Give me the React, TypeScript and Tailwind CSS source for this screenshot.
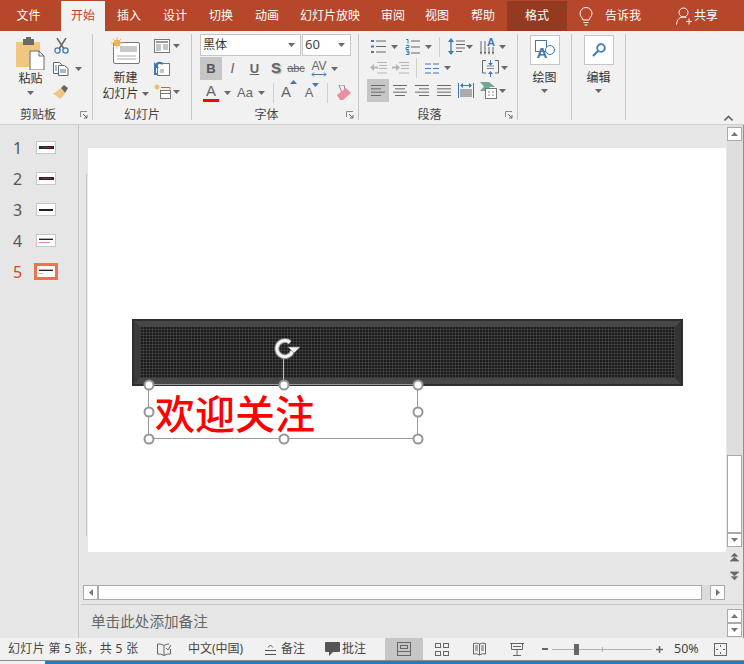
const Caret = ({ up = false, color = "#6a6a6a" }: { up?: boolean; color?: string }) => (
  <svg width="7" height="4" viewBox="0 0 7 4" className="shrink-0">
    <path d={up ? "M0 4L3.5 0L7 4Z" : "M0 0L7 0L3.5 4Z"} fill={color} />
  </svg>
);

const Launcher = () => (
  <svg width="8" height="8" viewBox="0 0 8 8" className="shrink-0">
    <path d="M.5 6V.5H7" fill="none" stroke="#8a8a8a" />
    <path d="M3 3L7 7M7 4V7H4" fill="none" stroke="#6a6a6a" />
  </svg>
);

// stacked text lines: every row is [x1, x2]
const Lines = ({ rows, w = 15, h = 13, color = "#6a6a6a" }: { rows: number[][]; w?: number; h?: number; color?: string }) => (
  <svg width={w} height={h} viewBox={`0 0 ${w} ${h}`} className="shrink-0">
    {rows.map(([a, b], i) => (
      <rect key={i} x={a} y={i * ((h - 1) / (rows.length - 1))} width={b - a} height="1" fill={color} />
    ))}
  </svg>
);

const PasteIcon = () => (
  <svg width="29" height="33" viewBox="0 0 29 33">
    <path d="M0 5h24v25H0z" fill="#efc77f" />
    <path d="M7 2h3V0h5v2h3v6H7z" fill="#6a6a6a" />
    <path d="M14 14h9l5 5v14H14z" fill="#fff" stroke="#6a6a6a" />
    <path d="M23 14v5h5" fill="none" stroke="#6a6a6a" />
  </svg>
);

const CutIcon = () => (
  <svg width="15" height="16" viewBox="0 0 15 16">
    <path d="M3 0L10 11M12 0L5 11" stroke="#666" strokeWidth="1.5" fill="none" />
    <circle cx="3.5" cy="12.5" r="2.6" fill="none" stroke="#3f78b5" strokeWidth="1.3" />
    <circle cx="11.5" cy="12.5" r="2.6" fill="none" stroke="#3f78b5" strokeWidth="1.3" />
  </svg>
);

const CopyIcon = () => (
  <svg width="16" height="14" viewBox="0 0 16 14">
    <path d="M.5.5h6l3 3v8h-9z" fill="#fff" stroke="#666" />
    <path d="M5.5 3.5h6l3.500 3v7h-9.500z" fill="#fff" stroke="#666" />
    <path d="M7 8h6M7 10h6M2 4h2M2 6h2M2 8h2" stroke="#3f78b5" />
  </svg>
);

const BrushIcon = () => (
  <svg width="16" height="14" viewBox="0 0 16 14">
    <path d="M0 9L8 3L12 9L7 14Q3 10 0 9Z" fill="#efc77f" />
    <path d="M8 3L11 0L15 3L12 8Z" fill="#666" />
  </svg>
);

const NewSlideIcon = () => (
  <svg width="29" height="28" viewBox="0 0 29 28">
    <rect x="2.500" y="5.500" width="26" height="21" rx="1.500" fill="#fff" stroke="#777" />
    <rect x="9" y="9" width="17" height="6" fill="#c9c9c9" />
    <path d="M6 19h19M6 22h19" stroke="#aaa" />
    <circle cx="6" cy="6" r="3.200" fill="#f2b25a" />
    <path d="M6 0v12M0 6h12M2 2l8 8M10 2l-8 8" stroke="#f2b25a" />
  </svg>
);

const LayoutIcon = () => (
  <svg width="16" height="14" viewBox="0 0 16 14">
    <rect x=".5" y=".5" width="15" height="13" fill="#fff" stroke="#777" />
    <rect x="2" y="2" width="12" height="2" fill="#999" />
    <rect x="2" y="5" width="5" height="7" fill="#c4c4c4" />
    <path d="M9 6h5M9 8h5M9 10h5" stroke="#888" />
  </svg>
);

const ResetIcon = () => (
  <svg width="16" height="15" viewBox="0 0 16 15">
    <rect x="3.500" y="2.500" width="12" height="12" fill="#fff" stroke="#777" />
    <rect x="6" y="8" width="4" height="4" fill="#c4c4c4" />
    <path d="M1 5Q4 0 9 3" fill="none" stroke="#3f78b5" strokeWidth="2" />
    <path d="M0 1v6h5z" fill="#3f78b5" />
    <path d="M1 7v6h3" fill="none" stroke="#3f78b5" strokeWidth="2" />
  </svg>
);

const SectionIcon = () => (
  <svg width="17" height="15" viewBox="0 0 17 15">
    <circle cx="3" cy="3" r="1.700" fill="#f2b25a" />
    <path d="M3 0v6M0 3h6M1 1l4 4M5 1l-4 4" stroke="#f2b25a" strokeWidth=".8" />
    <path d="M7 3.500h9v2" fill="none" stroke="#d0652f" />
    <rect x="6.500" y="6.500" width="10" height="8" fill="#fff" stroke="#777" />
    <path d="M6 9.500h11" stroke="#777" />
  </svg>
);

const EraserIcon = () => (
  <svg width="16" height="16" viewBox="0 0 16 16">
    <path d="M3 0L8 0L9 5L6 8Z" fill="none" stroke="#888" />
    <path d="M1 10L10 3L15 8L7 15H4Z" fill="#e8909e" />
  </svg>
);

const Bullets = () => (
  <svg width="15" height="15" viewBox="0 0 15 15">
    <path d="M0 1h3v2H0zM0 6.500h3v2H0zM0 12h3v2H0z" fill="#3f78b5" />
    <path d="M5 2h10M5 7.500h10M5 13h10" stroke="#666" />
  </svg>
);

const Numbers = () => (
  <svg width="15" height="16" viewBox="0 0 15 16">
    <path d="M1 .5h2v4M1 6.500h3v2H1v2h3M1 12h3v3.500H1M2 13.700h2" fill="none" stroke="#3f78b5" />
    <path d="M6 2h9M6 8h9M6 14h9" stroke="#666" />
  </svg>
);

const LineSpacing = () => (
  <svg width="17" height="17" viewBox="0 0 17 17">
    <path d="M3 1v15" stroke="#3f78b5" strokeWidth="1.300" />
    <path d="M0 4L3 0L6 4zM0 13L3 17L6 13z" fill="#3f78b5" />
    <path d="M8 3h9M8 6.500h9M8 10h9M8 13.500h6" stroke="#666" />
  </svg>
);

const TextDir = () => (
  <div className="relative w-[16px] h-[19px] shrink-0">
    <svg width="16" height="19" viewBox="0 0 16 19">
      <path d="M1 4v12M5 4v12M9 10v6M13 10v6" stroke="#666" />
      <path d="M0 15h2l-1 3zM4 15h2l-1 3zM8 15h2l-1 3zM12 15h2l-1 3z" fill="#555" />
    </svg>
    <span className="absolute left-[7px] top-0 text-[11px] leading-[10px] font-bold text-[#3f78b5] font-['Liberation_Sans',sans-serif]">A</span>
  </div>
);

const Indent = ({ out = false }: { out?: boolean }) => (
  <svg width="17" height="12" viewBox="0 0 17 12">
    <path d="M7 .5h10M9 3.500h8M9 6.500h8M7 11h10" stroke="#b5b5b5" />
    {out ? <path d="M0 5.500L4 2V4.500H8V6.500H4V9z" fill="#b5b5b5" /> : <path d="M8 5.500L4 2V4.500H0V6.500H4V9z" fill="#b5b5b5" />}
  </svg>
);

const Columns = () => (
  <svg width="14" height="11" viewBox="0 0 14 11">
    <path d="M0 1h6M0 5.500h6M0 10h6M8 1h6M8 5.500h6M8 10h6" stroke="#3f78b5" strokeWidth="1.200" />
  </svg>
);

const AlignText = () => (
  <svg width="17" height="17" viewBox="0 0 17 17">
    <path d="M4 .5H.5V13H4M13 .5h3.500V13H13" fill="none" stroke="#666" />
    <path d="M5 6h7M5 8.500h7" stroke="#888" />
    <path d="M8.500 0v4" stroke="#3f78b5" />
    <path d="M6 3h5L8.500 5.500zM6 14h5L8.500 11z" fill="#3f78b5" />
    <path d="M8.500 14v3" stroke="#3f78b5" />
  </svg>
);

const Distribute = () => (
  <svg width="16" height="15" viewBox="0 0 16 15">
    <path d="M.5 0v15M15.500 0v15" stroke="#3f78b5" />
    <path d="M3 2.500h10" stroke="#3f78b5" />
    <path d="M2 2.500L5 0V5zM14 2.500L11 0V5z" fill="#3f78b5" />
    <path d="M2 7h12M2 9h12M2 11h12M2 13h12" stroke="#666" />
  </svg>
);

const SmartArt = () => (
  <svg width="17" height="17" viewBox="0 0 17 17">
    <path d="M0 0H9L15 5H10L6 9H0L4 4.500z" fill="#6fa896" />
    <rect x="5.500" y="6.500" width="11" height="10" fill="#fff" stroke="#777" />
    <path d="M8 10h2M8 13h2M12 10h2M12 13h2" stroke="#888" />
  </svg>
);

const ShapesIcon = () => (
  <div className="relative w-[20px] h-[20px]">
    <svg width="20" height="16" viewBox="0 0 20 16">
      <rect x=".5" y=".5" width="11" height="11" fill="none" stroke="#3f78b5" />
      <circle cx="15" cy="10" r="4.500" fill="#fff" stroke="#3f78b5" />
    </svg>
    <span className="absolute left-[2px] top-[6px] text-[15px] leading-[14px] font-bold text-[#3f78b5] font-['Liberation_Sans',sans-serif]">A</span>
  </div>
);

const SearchIcon = () => (
  <svg width="14" height="14" viewBox="0 0 14 14">
    <circle cx="9" cy="5" r="3.800" fill="#fff" stroke="#3f78b5" strokeWidth="1.800" />
    <path d="M6 8L1 13" stroke="#3f78b5" strokeWidth="2.200" />
  </svg>
);

const Group = ({ w, label, labelPad, launcher, children }: { w: string; label: string; labelPad?: string; launcher?: boolean; children: React.ReactNode }) => (
  <div className={`${w} h-[86px] shrink-0 border-r border-[#c6c6c6] flex flex-col`}>
    <div className="flex-1 min-h-0">{children}</div>
    <div className={`h-[14px] relative flex items-center justify-center text-[12px] leading-[14px] text-[#444] ${labelPad ?? ""}`}>
      <span className="translate-y-[2px]">{label}</span>
      {launcher && (
        <span className="absolute right-[4px] top-[5px]">
          <Launcher />
        </span>
      )}
    </div>
  </div>
);

const ScrollBtn = ({ dir, h = "h-[14px]" }: { dir: "up" | "down" | "left" | "right"; h?: string }) => (
  <div className={`${h} w-[15px] shrink-0 bg-white border border-[#aaaaaa] flex items-center justify-center`}>
    {dir === "up" && <Caret up color="#777" />}
    {dir === "down" && <Caret color="#777" />}
    {dir === "left" && (
      <svg width="4" height="7" viewBox="0 0 4 7">
        <path d="M4 0V7L0 3.500Z" fill="#777" />
      </svg>
    )}
    {dir === "right" && (
      <svg width="4" height="7" viewBox="0 0 4 7">
        <path d="M0 0V7L4 3.500Z" fill="#777" />
      </svg>
    )}
  </div>
);

const DoubleArrow = ({ up }: { up?: boolean }) => (
  <svg width="9" height="9" viewBox="0 0 9 9">
    {up ? <path d="M4.500 0L8 3.500H1zM4.500 4L9 8H0zM0 8.500h9" fill="#666" stroke="#666" strokeWidth=".3" /> : <path d="M4.500 9L8 5.500H1zM4.500 5L9 1H0zM0 .5h9" fill="#666" stroke="#666" strokeWidth=".3" />}
  </svg>
);

const tabs = [
  { t: "开始", w: "w-[44px]", on: true },
  { t: "插入", w: "w-[48px]" },
  { t: "设计", w: "w-[44px]" },
  { t: "切换", w: "w-[48px]" },
  { t: "动画", w: "w-[44px]" },
  { t: "幻灯片放映", w: "w-[82px]" },
  { t: "审阅", w: "w-[44px]" },
  { t: "视图", w: "w-[44px]" },
  { t: "帮助", w: "w-[48px]" },
];

const handles = [
  [0, 0], [134.500, 0], [269, 0],
  [0, 27], [269, 27],
  [0, 54], [134.500, 54], [269, 54],
];

// little previews in the slide list
const Thumb = ({ n }: { n: number }) => (
  <div className="w-full h-full flex flex-col items-center justify-center">
    {n <= 2 && (
      <div className="w-[15px] h-[3px] bg-[#3c2226] flex items-center justify-center">
        <div className={`w-[9px] h-px ${n === 1 ? "bg-[#b01020]" : "bg-[#7a2a30]"}`} />
      </div>
    )}
    {n === 3 && <div className="w-[14px] h-[2px] bg-[#222222]" />}
    {n >= 4 && (
      <>
        <div className="w-[14px] h-px bg-[#b0b0b0]" />
        <div className="w-[14px] h-px bg-[#222222]" />
        <div className={`${n === 4 ? "w-[11px] bg-[#e58a8a]" : "w-[4px] bg-[#f0a0a0]"} h-px mt-[2px] self-start ml-[2px]`} />
      </>
    )}
  </div>
);

export default function App() {
  return (
    <div className="w-[744px] h-[664px] overflow-hidden flex flex-col bg-[#e6e6e6] text-[12px] font-['Noto_Sans','Noto_Sans_CJK_SC',sans-serif]">
      {/* Tab bar */}
      <div className="h-[31px] shrink-0 bg-[#b7472a] flex items-end text-white">
        <div className="w-[61px] pr-[4px] h-[30px] flex items-center justify-center">文件</div>
        {tabs.map((tab) => (
          <div key={tab.t} className={`${tab.w} h-[30px] flex items-center justify-center ${tab.on ? "bg-[#f1f1f1] text-[#b7472a]" : ""}`}>
            {tab.t}
          </div>
        ))}
        <div className="w-[60px] h-[30px] bg-[#933a20] flex items-center justify-center">格式</div>
        <div className="ml-[12px] h-[30px] flex items-center">
          <svg width="14" height="19" viewBox="0 0 14 19" fill="none" stroke="#fff">
            <path d="M4 13C3 10 1 9 1 6.500a6 6 0 0 1 12 0C13 9 11 10 10 13z" />
            <path d="M4.500 15.500h5M5.500 18h3" />
          </svg>
        </div>
        <div className="ml-[12px] h-[30px] flex items-center">告诉我</div>
        <div className="ml-[35px] h-[30px] flex items-center">
          <svg width="17" height="18" viewBox="0 0 17 18" fill="none" stroke="#fff">
            <circle cx="7.500" cy="5.500" r="4.500" />
            <path d="M.5 17.500C1 12 4 10 7.500 10c1 0 2 .2 2.800.6M13 11.500v6M10 14.500h6" />
          </svg>
        </div>
        <div className="ml-[1px] h-[30px] flex items-center">共享</div>
      </div>

      {/* Ribbon */}
      <div className="h-[94px] shrink-0 pt-[3px] flex border-b border-[#d0d0d0] bg-[#f1f1f1] bg-[radial-gradient(#fbfbfb_0.6px,transparent_0.7px)] bg-[length:4px_4px] text-[#333]">
        <Group w="w-[93px]" label="剪贴板" labelPad="pr-[16px]" launcher>
          <div className="flex">
            <div className="w-[52px] pl-[16px] pr-[7px] pt-[3px] flex flex-col items-center shrink-0">
              <PasteIcon />
              <div className="mt-[1px] leading-[16px] whitespace-nowrap">粘贴</div>
              <div className="mt-[4px]"><Caret /></div>
            </div>
            <div className="flex flex-col pl-[1px]">
              <div className="h-[23px] w-[16px] flex items-center justify-center"><CutIcon /></div>
              <div className="h-[23px] flex items-center"><CopyIcon /><span className="ml-[6px]"><Caret /></span></div>
              <div className="h-[23px] w-[16px] flex items-center justify-center"><BrushIcon /></div>
            </div>
          </div>
        </Group>

        <Group w="w-[99px]" label="幻灯片">
          <div className="flex">
            <div className="ml-[4px] w-[57px] pt-[3px] flex flex-col items-center shrink-0">
              <NewSlideIcon />
              <div className="mt-[5px] leading-[16px]">新建</div>
              <div className="leading-[16px] flex items-center whitespace-nowrap">幻灯片<span className="ml-[3px]"><Caret /></span></div>
            </div>
            <div className="flex flex-col">
              <div className="h-[23px] flex items-center"><LayoutIcon /><span className="ml-[3px]"><Caret /></span></div>
              <div className="h-[23px] flex items-center"><ResetIcon /></div>
              <div className="h-[23px] flex items-center"><SectionIcon /><span className="ml-[2px]"><Caret /></span></div>
            </div>
          </div>
        </Group>

        <Group w="w-[167px]" label="字体" labelPad="pr-[17px]" launcher>
          <div className="pl-[8px]">
            <div className="flex h-[23px] gap-[1px]">
              <div className="w-[101px] h-[22px] bg-white border border-[#c6c6c6] flex items-center justify-between pl-[2px] pr-[5px] text-[#333]">黑体<Caret /></div>
              <div className="w-[49px] h-[22px] bg-white border border-[#c6c6c6] flex items-center justify-between pl-[2px] pr-[5px] text-[13px] text-[#444]">60<Caret /></div>
            </div>
            <div className="flex h-[23px] items-center text-[#666] font-['Liberation_Sans',sans-serif]">
              <div className="w-[22px] h-[23px] bg-[#c6c6c6] flex items-center justify-center text-[13px] font-bold text-[#555]">B</div>
              <div className="w-[21px] flex justify-center text-[14px] italic">I</div>
              <div className="w-[23px] flex justify-center text-[13px] font-bold underline">U</div>
              <div className="w-[20px] flex justify-center text-[15px] font-bold [text-shadow:1px_1px_1px_#aaa]">S</div>
              <div className="w-[20px] flex justify-center text-[11px] line-through">abc</div>
              <div className="w-[26px] flex flex-col items-center leading-[10px] text-[12px]">
                AV
                <svg width="16" height="5" viewBox="0 0 16 5" className="mt-[1px]">
                  <path d="M1 2.500h14M3 .5L1 2.500l2 2M13 .5l2 2-2 2" fill="none" stroke="#3f78b5" />
                </svg>
              </div>
              <span className="ml-[-1px]"><Caret /></span>
            </div>
            <div className="flex h-[25px] items-center text-[#666] font-['Liberation_Sans',sans-serif]">
              <div className="w-[22px] flex flex-col items-center">
                <div className="text-[15px] leading-[15px]">A</div>
                <div className="w-[16px] h-[3px] bg-[#ff0000] mt-[1px]" />
              </div>
              <div className="w-[10px] flex justify-center"><Caret /></div>
              <div className="w-[26px] flex justify-center text-[13px]">Aa</div>
              <Caret />
              <div className="ml-[8px] h-[20px] w-px bg-[#d0d0d0]" />
              <div className="w-[30px] flex justify-center text-[15px]">A<span className="ml-[-1px] mt-[-1px]"><Caret up color="#3f78b5" /></span></div>
              <div className="w-[16px] flex justify-center text-[13px]">A<span className="ml-[-1px]"><Caret color="#3f78b5" /></span></div>
              <div className="ml-[7px] h-[20px] w-px bg-[#d0d0d0]" />
              <div className="ml-[8px]"><EraserIcon /></div>
            </div>
          </div>
        </Group>

        <Group w="w-[159px]" label="段落" labelPad="pr-[17px]" launcher>
          <div className="h-[23px] flex items-center pl-[12px] pt-[2px]">
            <Bullets /><span className="ml-[5px]"><Caret /></span>
            <span className="ml-[7px]"><Numbers /></span><span className="ml-[5px]"><Caret /></span>
            <div className="ml-[7px] h-[20px] w-px bg-[#d0d0d0]" />
            <span className="ml-[8px]"><LineSpacing /></span><span className="ml-[1px]"><Caret /></span>
            <span className="ml-[7px]"><TextDir /></span><span className="ml-[3px]"><Caret /></span>
          </div>
          <div className="h-[22px] flex items-center pl-[11px]">
            <Indent out /><span className="ml-[5px]"><Indent /></span>
            <div className="ml-[7px] h-[20px] w-px bg-[#d0d0d0]" />
            <span className="ml-[8px]"><Columns /></span><span className="ml-[5px]"><Caret /></span>
            <span className="ml-[31px]"><AlignText /></span><span className="ml-[2px]"><Caret /></span>
          </div>
          <div className="h-[23px] flex items-center pl-[8px]">
            <div className="w-[22px] h-[23px] bg-[#c6c6c6] flex items-center justify-center"><Lines rows={[[0, 14], [0, 10], [0, 14], [0, 10]]} w={14} h={11} /></div>
            <div className="w-[22px] flex justify-center"><Lines rows={[[0, 14], [2, 12], [0, 14], [2, 12]]} w={14} h={11} /></div>
            <div className="w-[22px] flex justify-center"><Lines rows={[[0, 14], [4, 14], [0, 14], [4, 14]]} w={14} h={11} /></div>
            <div className="w-[22px] flex justify-center"><Lines rows={[[0, 14], [0, 14], [0, 14], [0, 14]]} w={14} h={11} /></div>
            <div className="w-[22px] flex justify-center"><Distribute /></div>
            <span className="ml-[3px]"><SmartArt /></span><span className="ml-[2px]"><Caret /></span>
          </div>
        </Group>

        <Group w="w-[54px]" label="">
          <div className="flex flex-col items-center">
            <div className="mt-[1px] w-[30px] h-[30px] bg-white border border-[#c6c6c6] flex items-center justify-center"><ShapesIcon /></div>
            <div className="mt-[5px] leading-[16px]">绘图</div>
            <div className="mt-[3px]"><Caret /></div>
          </div>
        </Group>

        <Group w="w-[54px]" label="">
          <div className="flex flex-col items-center">
            <div className="mt-[1px] w-[30px] h-[30px] bg-white border border-[#c6c6c6] flex items-center justify-center"><SearchIcon /></div>
            <div className="mt-[5px] leading-[16px]">编辑</div>
            <div className="mt-[3px]"><Caret /></div>
          </div>
        </Group>

        <div className="flex-1 flex items-end justify-end pr-[11px] pb-[3px]">
          <svg width="9" height="6" viewBox="0 0 9 6">
            <path d="M.5 5.500L4.500 1.500L8.500 5.500" fill="none" stroke="#666" strokeWidth="1.600" />
          </svg>
        </div>
      </div>

      {/* Main area */}
      <div className="flex-1 min-h-0 flex">
        <div className="w-[79px] shrink-0 border-r border-[#c6c6c6] pt-[7px]">
          {[1, 2, 3, 4].map((n) => (
            <div key={n} className="h-[31px] flex items-center text-[16px] text-[#555]">
              <span className="w-[36px] pl-[13px]">{n}</span>
              <div className="w-[20px] h-[13px] bg-white border border-[#c6c6c6]">
                <Thumb n={n} />
              </div>
            </div>
          ))}
          <div className="h-[31px] flex items-center text-[16px] text-[#d24726]">
            <span className="w-[34px] pl-[13px]">5</span>
            <div className="w-[24px] h-[17px] bg-white border-[3px] border-[#f0704f]">
              <Thumb n={5} />
            </div>
          </div>
        </div>

        <div className="flex-1 min-w-0 flex flex-col border-r border-[#909090]">
          <div className="h-[460px] shrink-0 flex">
            <div className="flex-1 min-w-0 pt-[23px] pl-[9px]">
              <div className="w-[638px] h-[404px] bg-white relative">
                {/* left edge of the slide placeholder */}
                <div className="absolute left-[-2px] top-[26px] h-[362px] w-px bg-[#c6c6c6]" />
                {/* banner */}
                <div className="absolute left-[44px] top-[171px] w-[551px] h-[67px] border-[2px] border-[#2e2e2e] bg-[#2e2e2e]">
                  <div className="w-full h-full border-[6px] border-t-[#474747] border-l-[#3a3a3a] border-r-[#333333] border-b-[#474747] bg-[#1c1c1c] bg-[repeating-linear-gradient(90deg,rgba(255,255,255,0.11)_0_1px,transparent_1px_3px),repeating-linear-gradient(0deg,rgba(255,255,255,0.11)_0_1px,transparent_1px_3px)]" />
                </div>
                {/* selected text box */}
                <div className="absolute left-[60px] top-[236px] w-[270px] h-[55px] border border-[#9a9a9a]">
                  <div className="pl-[6px] pt-[2px] text-[40px] leading-[50px] font-medium text-[#ff0000] font-['Noto_Sans_CJK_SC',sans-serif] whitespace-nowrap">欢迎关注</div>
                  <div className="absolute left-[134px] top-[-27px] w-px h-[27px] bg-[#bbbbbb]" />
                  <svg width="28" height="24" viewBox="0 0 28 24" className="absolute left-[124px] top-[-47px]">
                    <path d="M17 4.500A8 8 0 1 0 19.500 13" fill="none" stroke="#8a8a8a" strokeWidth="5" />
                    <path d="M17 4.500A8 8 0 1 0 19.500 13" fill="none" stroke="#f4f4f4" strokeWidth="3" />
                    <path d="M15 9L27 9L21 15Z" fill="#f4f4f4" stroke="#8a8a8a" strokeWidth=".8" />
                  </svg>
                  {handles.map(([x, y]) => (
                    <div key={`${x}-${y}`} className="absolute w-[11px] h-[11px] rounded-full bg-white border-2 border-[#959595] -translate-x-1/2 -translate-y-1/2" style={{ left: x, top: y }} />
                  ))}
                </div>
              </div>
            </div>
            <div className="w-[16px] shrink-0 flex flex-col">
              <div className="h-[422px] bg-[#dedede] bg-[radial-gradient(#ebebeb_0.6px,transparent_0.7px)] bg-[length:4px_4px] pt-[2px] flex flex-col">
                <ScrollBtn dir="up" />
                <div className="flex-1" />
                <div className="w-[15px] h-[78px] bg-white border border-[#aaaaaa]" />
                <ScrollBtn dir="down" />
              </div>
              <div className="flex-1 flex flex-col items-center pr-[1px] pt-[6px] gap-[9px]">
                <DoubleArrow up />
                <DoubleArrow />
              </div>
            </div>
          </div>

          <div className="h-[15px] shrink-0 pl-[4px] flex">
            <ScrollBtn dir="left" h="h-[15px]" />
            <div className="w-[604px] h-[15px] bg-white border border-[#aaaaaa]" />
            <div className="w-[8px] h-[15px] bg-[#dcdcdc]" />
            <ScrollBtn dir="right" h="h-[15px]" />
          </div>

          <div className="mt-[4px] flex-1 min-h-0 border-t border-[#c6c6c6] flex ml-[2px]">
            <div className="flex-1 pl-[10px] pt-[6px] text-[14.600px] leading-[20px] text-[#666] whitespace-nowrap">单击此处添加备注</div>
            <div className="w-[16px] shrink-0 pt-[4px] flex flex-col">
              <ScrollBtn dir="up" />
              <ScrollBtn dir="down" />
            </div>
          </div>
        </div>
      </div>

      {/* Status bar */}
      <div className="h-[22px] shrink-0 bg-[#f1f1f1] bg-[radial-gradient(#fbfbfb_0.6px,transparent_0.7px)] bg-[length:4px_4px] flex items-center text-[#444] whitespace-nowrap">
        <span className="ml-[8px] w-[130px] tracking-[0.35px]">幻灯片 第 5 张，共 5 张</span>
        <svg width="14" height="13" viewBox="0 0 14 13" className="ml-[19px]" fill="none" stroke="#666">
          <path d="M7 2.500Q4 .5 .5 1v10Q4 10.500 7 12.500V2.500M7 2.500Q9 1 12 1M7 12.500Q10 10.500 13.500 11V6" />
          <path d="M9 5l2 2 3-5" />
        </svg>
        <span className="ml-[17px] w-[57px]">中文(中国)</span>
        <svg width="11" height="11" viewBox="0 0 11 11" className="ml-[20px]" fill="none" stroke="#555">
          <path d="M3 3.500L5.500 1L8 3.500M0 6.500h11M0 10.500h11" />
        </svg>
        <span className="ml-[5px]">备注</span>
        <svg width="15" height="14" viewBox="0 0 15 14" className="ml-[20px]">
          <path d="M1 0h13a1 1 0 0 1 1 1v8a1 1 0 0 1-1 1H8l-4 4v-4H1a1 1 0 0 1-1-1V1a1 1 0 0 1 1-1z" fill="#555" />
        </svg>
        <span className="ml-[2px]">批注</span>
        <div className="ml-[19px] w-[38px] h-[22px] bg-[#c6c6c6] flex items-center justify-center">
          <svg width="14" height="14" viewBox="0 0 14 14" fill="none" stroke="#666">
            <rect x=".5" y=".5" width="13" height="13" />
            <rect x="3.500" y="3.500" width="7" height="3" />
            <path d="M.5 9.500h13" />
          </svg>
        </div>
        <svg width="14" height="13" viewBox="0 0 14 13" className="ml-[12px]" fill="none" stroke="#666">
          <rect x=".5" y=".5" width="5" height="4" />
          <rect x="8.500" y=".5" width="5" height="4" />
          <rect x=".5" y="8.500" width="5" height="4" />
          <rect x="8.500" y="8.500" width="5" height="4" />
        </svg>
        <svg width="13" height="14" viewBox="0 0 13 14" className="ml-[24px]" fill="none" stroke="#666">
          <path d="M.5 1.500Q4 .5 6.500 2Q9 .5 12.500 1.500V12Q9 11 6.500 13Q4 11 .5 12zM6.500 2v11M2 4h3M2 6h3M2 8h3M8 4h3M8 6h3M8 8h3" />
        </svg>
        <svg width="14" height="13" viewBox="0 0 14 13" className="ml-[24px]" fill="none" stroke="#666">
          <path d="M0 .5h14M1.500 1v5.500h11V1M7 7v5M3 12.500h8" />
          <path d="M3 3.500h8" />
        </svg>
        <div className="ml-[18px] w-[6px] h-[2px] bg-[#666]" />
        <div className="ml-[4px] w-[100px] h-[1px] bg-[#b0b0b0] relative">
          <div className="absolute left-[22px] top-[-5px] w-[5px] h-[11px] bg-[#666]" />
          <div className="absolute left-[50px] top-[-2px] w-px h-[5px] bg-[#b0b0b0]" />
        </div>
        <svg width="7" height="7" viewBox="0 0 7 7" className="ml-[4px]">
          <path d="M0 3.500h7M3.500 0v7" stroke="#666" strokeWidth="1.500" />
        </svg>
        <span className="ml-[11px] text-[12.500px] w-[28px]">50%</span>
        <svg width="13" height="13" viewBox="0 0 13 13" className="ml-[12px]" fill="none" stroke="#666">
          <rect x=".5" y=".5" width="12" height="12" />
          <path d="M6.500 2v2M6.500 9v2M2 6.500h2M9 6.500h2" />
        </svg>
      </div>

      <div className="h-[4px] shrink-0 border-t border-[#8a8a8a] flex">
        <div className="w-[45px] bg-[#f1f1f1]" />
        <div className="flex-1 bg-[#0f7fd8]" />
      </div>
    </div>
  );
}
